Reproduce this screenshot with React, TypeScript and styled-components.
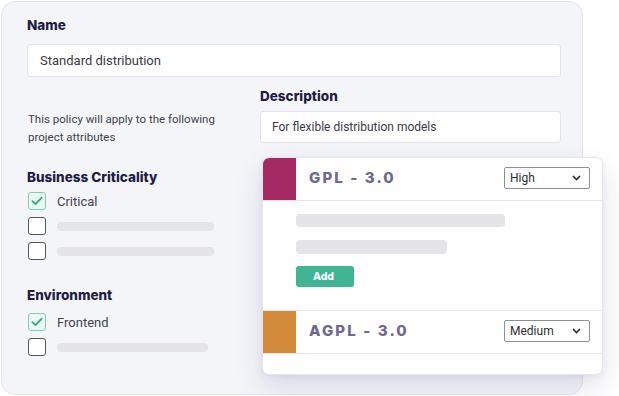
import React from "react";
import styled, { createGlobalStyle } from "styled-components";

const GlobalStyle = createGlobalStyle`
  html, body { margin: 0; padding: 0; background: #ffffff; }
  body { font-family: Roboto, "Liberation Sans", Arial, sans-serif; -webkit-font-smoothing: antialiased; }
  * { box-sizing: border-box; }
`;

const Page = styled.div`
  width: 619px;
  height: 396px;
  padding: 1px 0 0 1px;
  overflow: hidden;
`;

const Panel = styled.div`
  width: 582px;
  height: 394px;
  background: #f4f5f9;
  border: 1px solid #e1e2e9;
  border-radius: 14px;
  padding: 14px 21px 0 25px;
`;

const Label = styled.div<{ $mt?: number; $mb?: number }>`
  font-family: Inter, "Noto Sans", sans-serif;
  font-weight: 800;
  font-size: 13.5px;
  line-height: 18px;
  color: #1f1d46;
  margin-top: ${(p) => p.$mt ?? 0}px;
  margin-bottom: ${(p) => p.$mb ?? 0}px;
`;

const TextInput = styled.div<{ $h: number; $pad: number; $fs: number }>`
  height: ${(p) => p.$h}px;
  background: #ffffff;
  border: 1px solid #e3e4ea;
  border-radius: 3px;
  display: flex;
  align-items: center;
  padding-left: ${(p) => p.$pad}px;
  font-size: ${(p) => p.$fs}px;
  color: #3b3b47;
`;

const Columns = styled.div`
  display: grid;
  grid-template-columns: 233px 301px;
`;

const LeftCol = styled.div`
  display: flex;
  flex-direction: column;
`;

const RightCol = styled.div`
  display: flex;
  flex-direction: column;
`;

const Intro = styled.p`
  margin: 33px 0 0 1px;
  font-size: 11.5px;
  line-height: 18px;
  color: #3f3f4b;
`;

const CheckList = styled.div<{ $mt: number }>`
  display: flex;
  flex-direction: column;
  gap: 7px;
  margin-top: ${(p) => p.$mt}px;
`;

const CheckRow = styled.div`
  display: flex;
  align-items: center;
  gap: 11px;
  height: 18px;
  padding-left: 1px;
`;

const Box = styled.div<{ $checked?: boolean }>`
  width: 18px;
  height: 18px;
  flex: none;
  border-radius: 3px;
  display: flex;
  align-items: center;
  justify-content: center;
  background: ${(p) => (p.$checked ? "#eaf7f2" : "#ffffff")};
  border: ${(p) => (p.$checked ? "1.5px solid #7fcfb2" : "1px solid #55555f")};
`;

const CheckText = styled.span`
  font-size: 13px;
  color: #43434f;
`;

const Bar = styled.div<{ $w: number; $h: number }>`
  width: ${(p) => p.$w}px;
  height: ${(p) => p.$h}px;
  border-radius: 4px;
  background: #e4e4e9;
`;

const Card = styled.div`
  margin: 14px 0 0 2px;
  width: 341px;
  height: 218px;
  background: #ffffff;
  border: 1px solid #e6e6ec;
  border-radius: 7px;
  overflow: hidden;
  box-shadow: 0 12px 28px rgba(40, 40, 90, 0.13), 0 2px 6px rgba(40, 40, 90, 0.06);
  display: flex;
  flex-direction: column;
`;

const LicenseRow = styled.div<{ $h: number }>`
  display: flex;
  align-items: stretch;
  height: ${(p) => p.$h}px;
  border-bottom: 1px solid #e4e4ea;
  flex: none;
`;

const Strip = styled.div<{ $color: string }>`
  width: 33px;
  flex: none;
  background: ${(p) => p.$color};
`;

const LicenseTitle = styled.div`
  flex: 1;
  display: flex;
  align-items: center;
  padding: 0 0 3px 13px;
  font-family: Inter, "Noto Sans", sans-serif;
  font-weight: 800;
  font-size: 15px;
  letter-spacing: 2.1px;
  color: #6c6892;
`;

const SelectBox = styled.div`
  align-self: center;
  margin: 0 12px 2px 0;
  width: 86px;
  height: 22px;
  border: 1px solid #8e8e96;
  border-radius: 2px;
  display: flex;
  align-items: center;
  justify-content: space-between;
  padding: 0 8px 0 5px;
  font-size: 12px;
  color: #2e2e36;
`;

const CardBody = styled.div`
  height: 110px;
  flex: none;
  padding: 13px 0 0 33px;
  display: flex;
  flex-direction: column;
  align-items: flex-start;
  border-bottom: 1px solid #e4e4ea;
`;

const BodyBars = styled.div`
  display: flex;
  flex-direction: column;
  gap: 13px;
`;

const AddButton = styled.div`
  margin-top: 12px;
  width: 58px;
  height: 21px;
  border-radius: 3px;
  background: #3fb593;
  color: #ffffff;
  font-family: Inter, "Noto Sans", sans-serif;
  font-weight: 800;
  font-size: 10.5px;
  display: flex;
  align-items: center;
  justify-content: center;
  padding-right: 3px;
`;

const Chevron = () => (
  <svg width="9" height="6" viewBox="0 0 9 6" fill="none">
    <path d="M1 1l3.5 3.5L8 1" stroke="#2a2a30" strokeWidth="1.6" />
  </svg>
);

const Check = () => (
  <svg width="12" height="10" viewBox="0 0 12 10" fill="none">
    <path d="M1.5 5.2l3 3 6-6.4" stroke="#3aa984" strokeWidth="1.9" strokeLinecap="round" strokeLinejoin="round" />
  </svg>
);

const Option = ({ checked, label, bar }: { checked?: boolean; label?: string; bar?: number }) => (
  <CheckRow>
    <Box $checked={checked}>{checked && <Check />}</Box>
    {label ? <CheckText>{label}</CheckText> : <Bar $w={bar ?? 157} $h={9} />}
  </CheckRow>
);

const License = ({ name, color, level }: { name: string; color: string; level: string }) => (
  <LicenseRow $h={43}>
    <Strip $color={color} />
    <LicenseTitle>{name}</LicenseTitle>
    <SelectBox>
      <span>{level}</span>
      <Chevron />
    </SelectBox>
  </LicenseRow>
);

export default function App() {
  return (
    <Page>
      <GlobalStyle />
      <Panel>
        <Label $mb={10}>Name</Label>
        <TextInput $h={33} $pad={12} $fs={13}>Standard distribution</TextInput>
        <Columns>
          <LeftCol>
            <Intro>
              This policy will apply to the following
              <br />
              project attributes
            </Intro>
            <Label $mt={22}>Business Criticality</Label>
            <CheckList $mt={6}>
              <Option checked label="Critical" />
              <Option bar={157} />
              <Option bar={157} />
            </CheckList>
            <Label $mt={26}>Environment</Label>
            <CheckList $mt={9}>
              <Option checked label="Frontend" />
              <Option bar={151} />
            </CheckList>
          </LeftCol>
          <RightCol>
            <Label $mt={10} $mb={6}>Description</Label>
            <TextInput $h={32} $pad={11} $fs={12}>For flexible distribution models</TextInput>
            <Card>
              <License name="GPL - 3.0" color="#a52a63" level="High" />
              <CardBody>
                <BodyBars>
                  <Bar $w={209} $h={13} />
                  <Bar $w={151} $h={14} />
                </BodyBars>
                <AddButton>Add</AddButton>
              </CardBody>
              <License name="AGPL - 3.0" color="#d38a3a" level="Medium" />
            </Card>
          </RightCol>
        </Columns>
      </Panel>
    </Page>
  );
}
